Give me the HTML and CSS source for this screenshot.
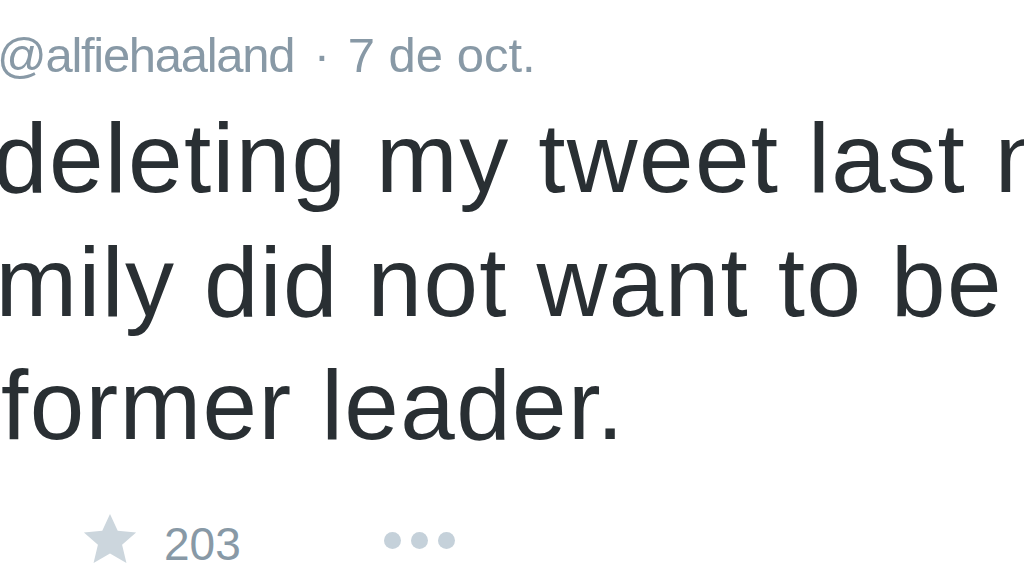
FILE: index.html
```html
<!DOCTYPE html>
<html lang="en">
<head>
    <meta charset="UTF-8">
    <meta name="viewport" content="width=device-width, initial-scale=1.0">
    <title>Tweet</title>
    <link rel="stylesheet" href="styles.css">
</head>
<body>

    <div class="tweet">
        <div class="tweet-header">
            <span class="username">@alfiehaaland</span>
            <span class="dot">&middot;</span>
            <span class="time">7 de oct.</span>
        </div>

        <p class="tweet-text">
            <span class="line">deleting my tweet last night</span>
            <span class="line line-cut">family did not want to be</span>
            <span class="line line-last">former leader.</span>
        </p>

        <div class="tweet-actions">
            <span class="action fav">
                <svg class="star" viewBox="0 0 24 24" width="60" height="58">
                    <path d="M12 1.2l3.2 7 7.6.7-5.8 5.1 1.8 7.5L12 17.6l-6.8 3.9 1.8-7.5-5.8-5.1 7.6-.7z"/>
                </svg>
                <span class="count">203</span>
            </span>
            <span class="action more">
                <i></i><i></i><i></i>
            </span>
        </div>
    </div>

</body>
</html>
```

FILE: styles.css
```css
body {
    margin: 0;
    padding: 0;
    background-color: #fff;
    font-family: "Liberation Sans", Arial, sans-serif;
    overflow: hidden;
}

.tweet {
    width: 1024px;
    height: 576px;
    overflow: hidden;
}

.tweet-header {
    margin: 25px 0 0 -3px;
    font-size: 49px;
    line-height: 60px;
    color: #8899a6;
    white-space: nowrap;
}

.tweet-header .username {
    letter-spacing: -1.3px;
}

.tweet-header .dot {
    margin: 0 4px 0 6px;
}

.tweet-text {
    margin: 12px 0 0 -7px;
    font-size: 98px;
    line-height: 123.5px;
    letter-spacing: 1.4px;
    color: #292f33;
    white-space: nowrap;
}

.line {
    display: block;
}

.line-cut {
    text-indent: -82px;
}

.line-last {
    margin-left: 8px;
}

.tweet-actions {
    display: flex;
    align-items: center;
    height: 60px;
    margin-top: 46px;
    padding-left: 80px;
}

.action {
    display: flex;
    align-items: center;
}

.star {
    fill: #ccd6dd;
    margin-top: -8px;
}

.count {
    margin-left: 24px;
    font-size: 46px;
    color: #8899a6;
}

.more {
    margin-left: 143px;
    gap: 10px;
    margin-top: -6px;
}

.more i {
    display: block;
    width: 17px;
    height: 17px;
    border-radius: 50%;
    background-color: #c5d1da;
}
```
